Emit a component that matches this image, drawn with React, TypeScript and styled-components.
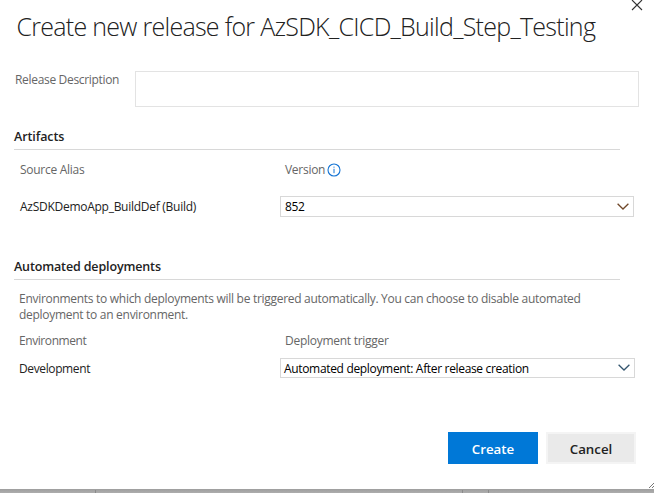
import React from 'react';
import styled, { createGlobalStyle } from 'styled-components';

const GlobalStyle = createGlobalStyle`
  * { box-sizing: border-box; }
  body {
    margin: 0;
    overflow: hidden;
    background: #ababab;
    font: 12px/16px "Open Sans", "Noto Sans", sans-serif;
    color: #222;
  }
`;

const Page = styled.div`
  height: 493px;
  display: flex;
  flex-direction: column;
  overflow: hidden;
`;

const Dialog = styled.main`
  position: relative;
  height: 489px;
  flex: none;
  padding-top: 10px;
  background: #fff;
`;

const CloseButton = styled.button`
  position: absolute;
  top: -1px;
  left: 631px;
  width: 12px;
  height: 12px;
  padding: 0;
  border: 0;
  background: none;
  svg { display: block; }
`;

const ResizeGrip = styled.svg`
  position: absolute;
  right: 0;
  bottom: 1px;
`;

const Title = styled.h1`
  margin: 0 0 29px 16.5px;
  font-size: 25px;
  line-height: 32px;
  font-weight: 300;
  letter-spacing: -0.72px;
  white-space: nowrap;
  color: #212121;
`;

const DescriptionRow = styled.div`
  display: grid;
  grid-template-columns: 120px 504px;
  margin-left: 15px;
  height: 36px;
`;

const DescriptionInput = styled.textarea`
  width: 504px;
  height: 36px;
  border: 1px solid #e3e3e3;
  outline: 0;
  resize: none;
  background: #fff;
`;

const Label = styled.span<{ $tone?: 'muted' | 'dark'; $tracking: number; $drop?: number }>`
  padding-top: ${p => p.$drop ?? 0}px;
  color: ${p => (p.$tone === 'dark' ? '#222' : '#666')};
  letter-spacing: ${p => p.$tracking}px;
  white-space: nowrap;
`;

const Section = styled.section<{ $top: number }>`
  margin: ${p => p.$top}px 0 0 14px;
`;

const SectionTitle = styled.h2<{ $tracking: number }>`
  width: 606px;
  height: 22px;
  margin: 0;
  padding-top: 1px;
  border-bottom: 1px solid #d8d8d8;
  font-size: 12.5px;
  line-height: 16px;
  font-weight: 600;
  letter-spacing: ${p => p.$tracking}px;
  color: #222;
`;

const FieldRow = styled.div<{ $top: number; $indent: number }>`
  display: grid;
  grid-template-columns: ${p => 266 - p.$indent}px auto;
  justify-content: start;
  align-items: center;
  margin: ${p => p.$top}px 0 0 ${p => p.$indent}px;
`;

const ColumnHead = styled.div`
  display: flex;
  align-items: center;
  height: 16px;
  padding-left: 5px;
`;

const InfoIcon = styled.svg`
  margin-left: 2px;
`;

const Select = styled.div<{ $width: number; $height: number; $inset: number }>`
  display: flex;
  align-items: center;
  justify-content: space-between;
  width: ${p => p.$width}px;
  height: ${p => p.$height}px;
  padding: 0 4px 0 ${p => p.$inset}px;
  border: 1px solid #d8d8d8;
  color: #000;
  background: #fff;
`;

const SelectText = styled.span<{ $tracking: number; $drop?: number }>`
  padding-top: ${p => p.$drop ?? 0}px;
  letter-spacing: ${p => p.$tracking}px;
  white-space: nowrap;
`;

const Hint = styled.p`
  margin: 11px 0 0 5px;
  color: #666;
  letter-spacing: -0.29px;
  white-space: nowrap;
`;

const Actions = styled.div`
  display: flex;
  gap: 8px;
  margin: 54px 0 0 448px;
`;

const Button = styled.button<{ $primary?: boolean }>`
  width: 90px;
  height: 32px;
  padding: ${p => (p.$primary ? 2 : 1)}px 0 0;
  border: ${p => (p.$primary ? '0' : '2px solid #f4f4f4')};
  background: ${p => (p.$primary ? '#0078d7' : '#eaeaea')};
  color: ${p => (p.$primary ? '#fff' : '#222')};
  font: 600 13.3px/18px "Open Sans", "Noto Sans", sans-serif;
`;

const Backdrop = styled.div`
  display: grid;
  grid-template-columns: 96px 367px 26px 1fr;
  height: 4px;
  background: linear-gradient(#9e9e9e, #a4a4a4 40%, #adadad);
`;

const BackdropCell = styled.div`
  height: 3px;
  margin-top: 1px;
  border-right: 1px solid #8a8a8a;
`;

function Chevron({ color }: { color: string }) {
  return (
    <svg width="12" height="8" viewBox="0 0 12 8" fill="none">
      <path d="M.6 .8 6 6 11.4 .8" stroke={color} strokeWidth="1.3" />
    </svg>
  );
}

export default function App() {
  return (
    <Page>
      <GlobalStyle />
      <Dialog>
        <CloseButton aria-label="Close">
          <svg width="12" height="12" viewBox="0 0 12 12">
            <path d="M1 1l10 10M11 1L1 11" stroke="#333" strokeWidth="1.1" />
          </svg>
        </CloseButton>
        <Title>Create new release for AzSDK_CICD_Build_Step_Testing</Title>
        <DescriptionRow>
          <Label $tracking={-0.32} $drop={1}>Release Description</Label>
          <DescriptionInput aria-label="Release Description" />
        </DescriptionRow>

        <Section $top={21}>
          <SectionTitle $tracking={-0.09}>Artifacts</SectionTitle>
          <FieldRow $top={12} $indent={6}>
            <Label $tracking={-0.28}>Source Alias</Label>
            <ColumnHead>
              <Label $tracking={-0.28}>Version</Label>
              <InfoIcon width="14" height="14" viewBox="0 0 14 14" fill="none">
                <circle cx="7" cy="7" r="6" stroke="#1474d4" strokeWidth="1.1" />
                <path d="M7 5.8v4.4M7 3.6v1.1" stroke="#1474d4" strokeWidth="1" />
              </InfoIcon>
            </ColumnHead>
          </FieldRow>
          <FieldRow $top={18} $indent={6}>
            <Label $tone="dark" $tracking={-0.27}>AzSDKDemoApp_BuildDef (Build)</Label>
            <Select $width={354} $height={21} $inset={4}>
              <SelectText $tracking={-0.3}>852</SelectText>
              <Chevron color="#70482a" />
            </Select>
          </FieldRow>
        </Section>

        <Section $top={41}>
          <SectionTitle $tracking={-0.14}>Automated deployments</SectionTitle>
          <Hint>
            Environments to which deployments will be triggered automatically. You can choose to disable automated
            <br />
            deployment to an environment.
          </Hint>
          <FieldRow $top={10} $indent={5}>
            <Label $tracking={-0.42}>Environment</Label>
            <ColumnHead>
              <Label $tracking={-0.27}>Deployment trigger</Label>
            </ColumnHead>
          </FieldRow>
          <FieldRow $top={9} $indent={5}>
            <Label $tone="dark" $tracking={-0.38} $drop={2}>Development</Label>
            <Select $width={355} $height={20} $inset={3}>
              <SelectText $tracking={-0.33} $drop={2}>Automated deployment: After release creation</SelectText>
              <Chevron color="#34566f" />
            </Select>
          </FieldRow>
        </Section>

        <Actions>
          <Button $primary>Create</Button>
          <Button>Cancel</Button>
        </Actions>
        <ResizeGrip width="5" height="5" viewBox="0 0 5 5">
          <path d="M0 5 5 0M3 5 5 3" stroke="#777" />
        </ResizeGrip>
      </Dialog>
      <Backdrop>
        <BackdropCell />
        <BackdropCell />
        <BackdropCell />
      </Backdrop>
    </Page>
  );
}
